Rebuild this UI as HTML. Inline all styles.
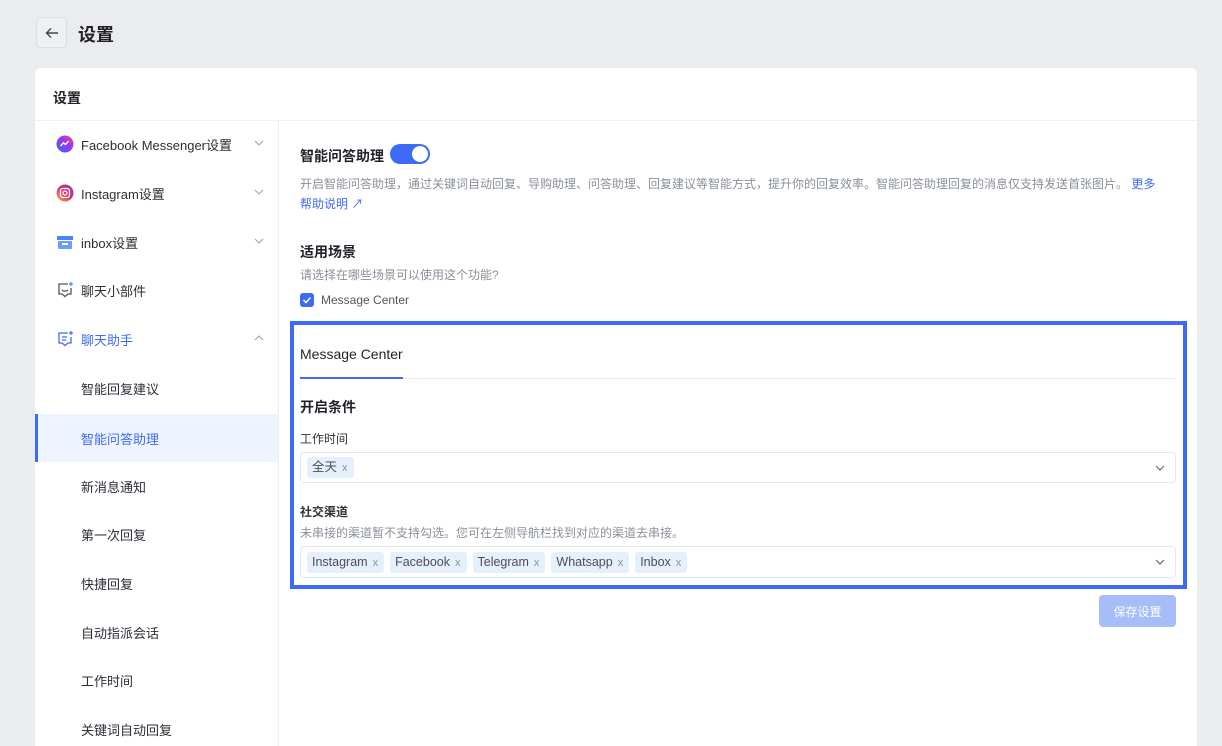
<!DOCTYPE html>
<html><head><meta charset="utf-8"><style>
*{box-sizing:border-box;margin:0;padding:0}
html,body{width:1222px;height:746px;overflow:hidden}
body{background:#ebecf0;font-family:"Liberation Sans","Noto Sans CJK SC",sans-serif;color:#1f2329;position:relative}
.abs{position:absolute}
.back{left:36px;top:17px;width:31px;height:31px;border:1px solid #dcdee3;border-radius:4px;background:#eef0f3;display:flex;align-items:center;justify-content:center}
.card{left:35px;top:68px;width:1162px;height:690px;background:#fff;border-radius:6px}
.side{left:35px;top:121px;width:244px;height:640px;border-right:1px solid #eceef2}
.item{position:absolute;left:0;width:243px;height:48px;display:flex;align-items:center;font-size:13px;color:#2b2f36}
.item .ic{position:absolute;left:21px;width:18px;height:18px}
.item .t{position:absolute;left:46px}
.chev{position:absolute;left:219px;top:19px}
.tag{display:inline-block;background:#e6effc;border-radius:3px;padding:0 6px 0 5px;height:21px;line-height:21px;font-size:12.5px;color:#4a4f57;margin-right:6px}
.tag i{font-style:normal;color:#8a9099;margin-left:5px;font-size:11px}
.sel{position:absolute;left:300px;width:876px;border:1px solid #e5e7eb;border-radius:4px;background:#fff;padding:0 6px;display:flex;align-items:center}
.sel svg{position:absolute;right:10px}
</style></head><body>
<div class="abs back"><svg width="16" height="16" viewBox="0 0 16 16"><path d="M14 8H2.5M7 3.5L2.5 8 7 12.5" fill="none" stroke="#444" stroke-width="1.4"/></svg></div>
<div class="abs" style="left:78px;top:21px;font-size:18px;font-weight:bold;color:#222">设置</div>
<div class="abs card"></div>
<div class="abs" style="left:53px;top:88px;font-size:14px;font-weight:bold">设置</div>
<div class="abs" style="left:35px;top:120px;width:1162px;height:1px;background:#f0f1f3"></div>
<div class="abs side">
 <div class="item" style="top:-1px"><svg class="ic" viewBox="0 0 18 18"><defs><linearGradient id="m" x1="0" y1="1" x2="1" y2="0"><stop offset="0" stop-color="#2a6cf6"/><stop offset=".6" stop-color="#a333f0"/><stop offset="1" stop-color="#f5576c"/></linearGradient></defs><circle cx="9" cy="9" r="8.5" fill="url(#m)"/><path d="M4.5 11l3-3.2 2 1.6 3-3.2" stroke="#fff" stroke-width="1.4" fill="none"/></svg><span class="t">Facebook Messenger设置</span><svg class="chev" width="10" height="8" viewBox="0 0 10 8"><path d="M1 2l4 4 4-4" fill="none" stroke="#a0a5ad" stroke-width="1.1"/></svg></div>
 <div class="item" style="top:48px"><svg class="ic" viewBox="0 0 18 18"><defs><linearGradient id="g" x1="0" y1="1" x2="1" y2="0"><stop offset="0" stop-color="#fbb040"/><stop offset=".5" stop-color="#e1306c"/><stop offset="1" stop-color="#833ab4"/></linearGradient></defs><circle cx="9" cy="9" r="8.5" fill="url(#g)"/><rect x="4.5" y="4.5" width="9" height="9" rx="2.5" fill="none" stroke="#fff" stroke-width="1.3"/><circle cx="9" cy="9" r="2" fill="none" stroke="#fff" stroke-width="1.3"/></svg><span class="t">Instagram设置</span><svg class="chev" width="10" height="8" viewBox="0 0 10 8"><path d="M1 2l4 4 4-4" fill="none" stroke="#a0a5ad" stroke-width="1.1"/></svg></div>
 <div class="item" style="top:97px"><svg class="ic" viewBox="0 0 18 18"><path d="M1 3h16v4H1z" fill="#4b84f8"/><rect x="2" y="8" width="14" height="8" rx="1" fill="#6b9cfb"/><rect x="6" y="10" width="6" height="2" fill="#fff"/></svg><span class="t">inbox设置</span><svg class="chev" width="10" height="8" viewBox="0 0 10 8"><path d="M1 2l4 4 4-4" fill="none" stroke="#a0a5ad" stroke-width="1.1"/></svg></div>
 <div class="item" style="top:145px"><svg class="ic" viewBox="0 0 18 18"><path d="M12 3H3v10h3l3 2.5 3-2.5h3V7" fill="none" stroke="#555" stroke-width="1.3"/><path d="M6 9c1.5 1.5 4.5 1.5 6 0" fill="none" stroke="#555" stroke-width="1.3"/><path d="M15 1v4M13 3h4" stroke="#4b84f8" stroke-width="1.2"/></svg><span class="t">聊天小部件</span></div>
 <div class="item" style="top:194px;color:#3e6bf5"><svg class="ic" viewBox="0 0 18 18"><path d="M12 3H3v10h3l3 2.5 3-2.5h3V7" fill="none" stroke="#3e6bf5" stroke-width="1.3"/><path d="M6 7h5M6 10h4" stroke="#3e6bf5" stroke-width="1.3"/><path d="M15 1v4M13 3h4" stroke="#3e6bf5" stroke-width="1.2"/></svg><span class="t">聊天助手</span><svg class="chev" width="10" height="8" viewBox="0 0 10 8"><path d="M1 6l4-4 4 4" fill="none" stroke="#a0a5ad" stroke-width="1.1"/></svg></div>
 <div class="item" style="top:243px"><span class="t">智能回复建议</span></div>
 <div class="item" style="top:293px;background:#eef4ff;color:#3e6bf5"><div style="position:absolute;left:0;top:0;width:3px;height:48px;background:#3e6bf5"></div><span class="t">智能问答助理</span></div>
 <div class="item" style="top:341px"><span class="t">新消息通知</span></div>
 <div class="item" style="top:389px"><span class="t">第一次回复</span></div>
 <div class="item" style="top:438px"><span class="t">快捷回复</span></div>
 <div class="item" style="top:487px"><span class="t">自动指派会话</span></div>
 <div class="item" style="top:535px"><span class="t">工作时间</span></div>
 <div class="item" style="top:584px"><span class="t">关键词自动回复</span></div>
</div>
<div class="abs" style="left:300px;top:146px;font-size:14px;font-weight:bold">智能问答助理</div>
<div class="abs" style="left:390px;top:144px;width:40px;height:20px;border-radius:10px;background:#3e6bf5"><div style="position:absolute;right:2px;top:2px;width:16px;height:16px;border-radius:50%;background:#fff"></div></div>
<div class="abs" style="left:300px;top:174px;width:880px;font-size:12px;line-height:20px;color:#8a9099">开启智能问答助理，通过关键词自动回复、导购助理、问答助理、回复建议等智能方式，提升你的回复效率。智能问答助理回复的消息仅支持发送首张图片。 <span style="color:#3e6bf5">更多<br>帮助说明 ↗</span></div>
<div class="abs" style="left:300px;top:242px;font-size:14px;font-weight:bold">适用场景</div>
<div class="abs" style="left:300px;top:266px;font-size:12px;color:#8a9099">请选择在哪些场景可以使用这个功能?</div>
<div class="abs" style="left:300px;top:293px;width:14px;height:14px;border-radius:3px;background:#3e6bf5"><svg width="14" height="14" viewBox="0 0 14 14"><path d="M3.5 7l2.5 2.5 4.5-5" fill="none" stroke="#fff" stroke-width="1.5"/></svg></div>
<div class="abs" style="left:321px;top:293px;font-size:12px;color:#555">Message Center</div>
<div class="abs" style="left:290px;top:321px;width:897px;height:268px;border:4px solid #3e6bf5"></div>
<div class="abs" style="left:300px;top:346px;font-size:14px">Message Center</div>
<div class="abs" style="left:300px;top:378px;width:876px;height:1px;background:#e8eaee"></div>
<div class="abs" style="left:300px;top:377px;width:103px;height:2px;background:#3e6bf5"></div>
<div class="abs" style="left:300px;top:397px;font-size:14px;font-weight:bold">开启条件</div>
<div class="abs" style="left:300px;top:430px;font-size:12px;color:#333">工作时间</div>
<div class="sel" style="top:452px;height:31px"><span class="tag">全天<i>x</i></span><svg width="10" height="8" viewBox="0 0 10 8"><path d="M1 2l4 4 4-4" fill="none" stroke="#666" stroke-width="1.2"/></svg></div>
<div class="abs" style="left:300px;top:503px;font-size:12px;font-weight:bold;color:#333">社交渠道</div>
<div class="abs" style="left:300px;top:524px;font-size:12px;color:#8a9099">未串接的渠道暂不支持勾选。您可在左侧导航栏找到对应的渠道去串接。</div>
<div class="sel" style="top:546px;height:32px"><span class="tag">Instagram<i>x</i></span><span class="tag">Facebook<i>x</i></span><span class="tag">Telegram<i>x</i></span><span class="tag">Whatsapp<i>x</i></span><span class="tag">Inbox<i>x</i></span><svg width="10" height="8" viewBox="0 0 10 8"><path d="M1 2l4 4 4-4" fill="none" stroke="#666" stroke-width="1.2"/></svg></div>
<div class="abs" style="left:1099px;top:595px;width:77px;height:32px;border-radius:4px;background:#a6bdf9;color:#fff;font-size:12px;display:flex;align-items:center;justify-content:center">保存设置</div>
</body></html>
